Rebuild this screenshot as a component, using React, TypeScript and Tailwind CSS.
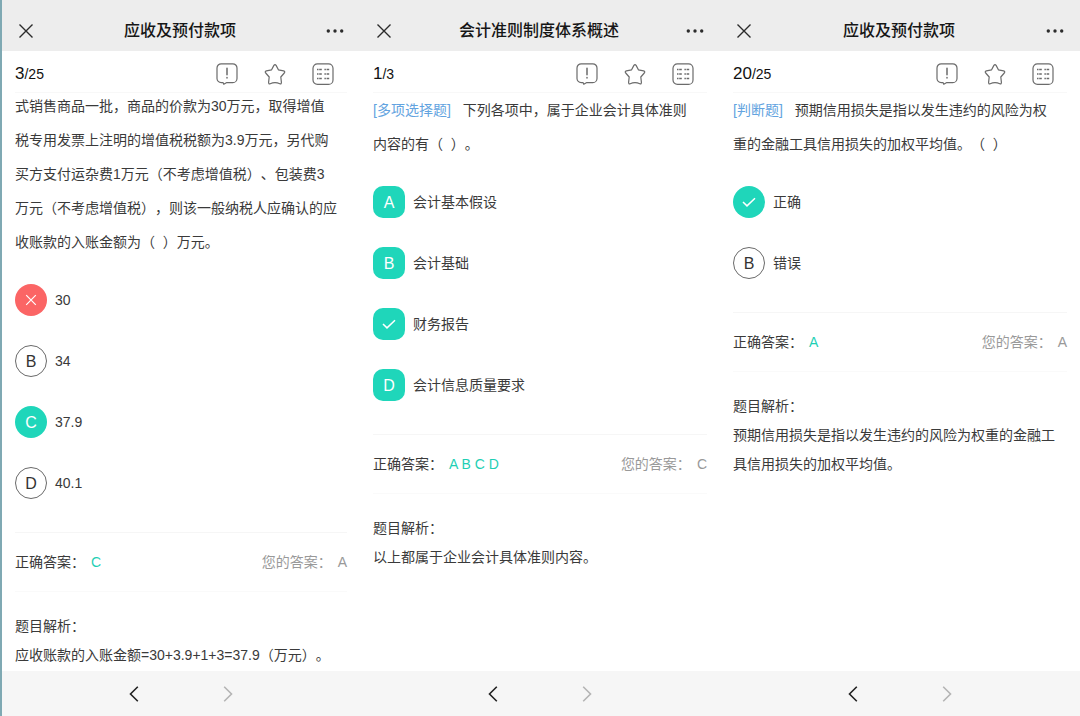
import clsx from "clsx";

type OptionState = "plain" | "correct" | "wrong" | "checked";

interface Option {
  letter: string;
  text: string;
  state: OptionState;
}

interface Quiz {
  title: string;
  current: number;
  total: number;
  kind?: string;
  question: string[];
  multiple?: boolean;
  scrolled?: boolean;
  options: Option[];
  answer: string;
  yours: string;
  analysis: string[];
}

const quizzes: Quiz[] = [
  {
    title: "应收及预付款项",
    current: 3,
    total: 25,
    scrolled: true,
    question: [
      "式销售商品一批，商品的价款为30万元，取得增值",
      "税专用发票上注明的增值税税额为3.9万元，另代购",
      "买方支付运杂费1万元（不考虑增值税）、包装费3",
      "万元（不考虑增值税），则该一般纳税人应确认的应",
      "收账款的入账金额为（\u00a0 ）万元。",
    ],
    options: [
      { letter: "A", text: "30", state: "wrong" },
      { letter: "B", text: "34", state: "plain" },
      { letter: "C", text: "37.9", state: "correct" },
      { letter: "D", text: "40.1", state: "plain" },
    ],
    answer: "C",
    yours: "A",
    analysis: ["应收账款的入账金额=30+3.9+1+3=37.9（万元）。"],
  },
  {
    title: "会计准则制度体系概述",
    current: 1,
    total: 3,
    kind: "[多项选择题]",
    question: ["下列各项中，属于企业会计具体准则", "内容的有（\u00a0 ）。"],
    multiple: true,
    options: [
      { letter: "A", text: "会计基本假设", state: "correct" },
      { letter: "B", text: "会计基础", state: "correct" },
      { letter: "C", text: "财务报告", state: "checked" },
      { letter: "D", text: "会计信息质量要求", state: "correct" },
    ],
    answer: "A B C D",
    yours: "C",
    analysis: ["以上都属于企业会计具体准则内容。"],
  },
  {
    title: "应收及预付款项",
    current: 20,
    total: 25,
    kind: "[判断题]",
    question: ["预期信用损失是指以发生违约的风险为权", "重的金融工具信用损失的加权平均值。（\u00a0 ）"],
    options: [
      { letter: "A", text: "正确", state: "checked" },
      { letter: "B", text: "错误", state: "plain" },
    ],
    answer: "A",
    yours: "A",
    analysis: ["预期信用损失是指以发生违约的风险为权重的金融工", "具信用损失的加权平均值。"],
  },
];

const CloseIcon = () => (
  <svg width="16" height="16" viewBox="0 0 16 16" fill="none" stroke="#2b2b2b" strokeWidth="1.4">
    <path d="M1.5 1.5l13 13M14.5 1.5l-13 13" />
  </svg>
);

const MoreIcon = () => (
  <svg width="18" height="16" viewBox="0 0 18 16" fill="#2b2b2b">
    <circle cx="2.3" cy="8" r="1.7" />
    <circle cx="9" cy="8" r="1.7" />
    <circle cx="15.7" cy="8" r="1.7" />
  </svg>
);

const iconProps = {
  width: 22,
  height: 22,
  viewBox: "0 0 22 22",
  fill: "none",
  stroke: "#6b6b6b",
  strokeWidth: 1.2,
  strokeLinecap: "round" as const,
  strokeLinejoin: "round" as const,
};

const FeedbackIcon = () => (
  <svg {...iconProps}>
    <path d="M5.2 .8h11.6a4.2 4.2 0 0 1 4.2 4.2v10.4a4.2 4.2 0 0 1-4.2 4.2H10.8L7.8 21.3L7 19.6H5.2A4.2 4.2 0 0 1 1 15.4V5A4.2 4.2 0 0 1 5.2 .8z" />
    <path d="M11 5.2v6.6M11 14.6v.3" strokeWidth="1.5" />
  </svg>
);

const StarIcon = () => (
  <svg {...iconProps}>
    <path d="M9.9 2.4Q11 .8 12.1 2.4L14.4 6.800L19.600 7.900Q21.500 8.500 20.300 10L16.800 14L17.400 19.400Q17.500 21.300 15.800 20.700Q11 18.700 6.200 20.700Q4.500 21.300 4.600 19.400L5.200 14L1.700 10Q.5 8.500 2.400 7.900L7.600 6.800z" />
  </svg>
);

const SheetIcon = () => (
  <svg {...iconProps}>
    <rect x="1" y=".8" width="20" height="20.6" rx="4.5" />
    <path
      strokeLinecap="butt"
      strokeWidth="1.4"
      d="M5 6.500h1.500M7.200 6.500h2.600M5 11h1.500M7.200 11h2.600M5 15.500h1.500M7.200 15.500h2.600M12.400 6.500h1.500M14.600 6.500h2.600M12.400 11h1.500M14.600 11h2.600M12.400 15.500h1.500M14.600 15.500h2.600"
    />
  </svg>
);

const Chevron = ({ dir }: { dir: "left" | "right" }) => (
  <svg
    width="10"
    height="16"
    viewBox="0 0 10 16"
    fill="none"
    stroke={dir === "left" ? "#222222" : "#b4b4b4"}
    strokeWidth="1.6"
  >
    <path d={dir === "left" ? "M8.8 .8L1.5 8l7.3 7.2" : "M1.2 .8L8.5 8l-7.3 7.2"} />
  </svg>
);

const Badge = ({ option, multiple }: { option: Option; multiple?: boolean }) => (
  <span
    className={clsx(
      "flex size-8 shrink-0 items-center justify-center text-base",
      multiple ? "rounded-[10px]" : "rounded-full",
      option.state === "plain" && "border border-[#6a6a6a] pt-0.5 text-[#333333]",
      option.state === "wrong" && "bg-[#fb6565] text-white",
      option.state === "correct" && "bg-[#1fd6ba] pt-0.5 text-white",
      option.state === "checked" && "bg-[#1fd6ba] text-white"
    )}
  >
    {option.state === "wrong" && (
      <svg width="12" height="12" viewBox="0 0 12 12" stroke="#ffffff" strokeWidth="1.2">
        <path d="M1.2 1.2l9.6 9.6M10.8 1.2l-9.6 9.6" />
      </svg>
    )}
    {option.state === "checked" && (
      <svg width="14" height="12" viewBox="0 0 14 12" fill="none" stroke="#ffffff" strokeWidth="1.5">
        <path d="M1 6l4 3.9L13 2.2" />
      </svg>
    )}
    {(option.state === "plain" || option.state === "correct") && option.letter}
  </span>
);

const QuizScreen = ({ quiz }: { quiz: Quiz }) => (
  <section className="flex min-w-0 flex-col first:border-l-2 first:border-[#7fa9b3]">
    <header className="flex items-center justify-between bg-[#ededed] px-4 pt-[19px] pb-2">
      <button type="button" aria-label="关闭">
        <CloseIcon />
      </button>
      <h1 className="text-base leading-6 font-medium text-[#161616]">{quiz.title}</h1>
      <button type="button" aria-label="更多">
        <MoreIcon />
      </button>
    </header>

    <main className="flex-1 px-[13px]">
      <div className="flex h-[42px] items-center justify-between border-b border-[#f8f8f8] pt-[5px] pr-[13px]">
        <p className="text-sm text-[#111111]">
          <span className="text-[17px]">{quiz.current}</span>/{quiz.total}
        </p>
        <div className="flex items-center gap-[26px]">
          <button type="button" aria-label="反馈">
            <FeedbackIcon />
          </button>
          <button type="button" aria-label="收藏">
            <StarIcon />
          </button>
          <button type="button" aria-label="答题卡">
            <SheetIcon />
          </button>
        </div>
      </div>

      <div className={clsx("text-sm leading-[34px]", quiz.scrolled && "-mt-1")}>
        {quiz.question.map((line, i) => (
          <p key={line} className="flex gap-3 whitespace-nowrap">
            {i === 0 && quiz.kind && <span className="text-[#62a3e0]">{quiz.kind}</span>}
            <span>{line}</span>
          </p>
        ))}
      </div>

      <div className="mt-[25px] flex flex-col items-start gap-[29px]">
        {quiz.options.map((option) => (
          <button key={option.letter} type="button" className="flex items-center gap-2 text-sm">
            <Badge option={option} multiple={quiz.multiple} />
            {option.text}
          </button>
        ))}
      </div>

      <div className="mt-[33px] flex h-[60px] items-center justify-between border-t border-b border-t-[#f6f6f6] border-b-[#fafafa] text-sm">
        <p>
          正确答案：<span className="ml-1.5 text-[#1fcfb4]">{quiz.answer}</span>
        </p>
        <p className="text-[#999999]">
          您的答案：<span className="ml-1.5">{quiz.yours}</span>
        </p>
      </div>

      <div className="mt-5 text-sm leading-[29px]">
        <h2>题目解析：</h2>
        {quiz.analysis.map((line) => (
          <p key={line} className="whitespace-nowrap">
            {line}
          </p>
        ))}
      </div>
    </main>

    <footer className="flex h-[45px] items-center justify-center gap-[84px] bg-[#f6f6f6]">
      <button type="button" aria-label="上一页">
        <Chevron dir="left" />
      </button>
      <button type="button" aria-label="下一页">
        <Chevron dir="right" />
      </button>
    </footer>
  </section>
);

const App = () => {
  return (
    <div
      lang="zh-CN"
      className="grid min-h-screen grid-cols-3 bg-white font-['Liberation_Sans','Noto_Sans_CJK_SC',sans-serif] text-[#3a3a3a] [text-spacing-trim:space-all]"
    >
      {quizzes.map((quiz) => (
        <QuizScreen key={quiz.current} quiz={quiz} />
      ))}
    </div>
  );
};

export default App;
